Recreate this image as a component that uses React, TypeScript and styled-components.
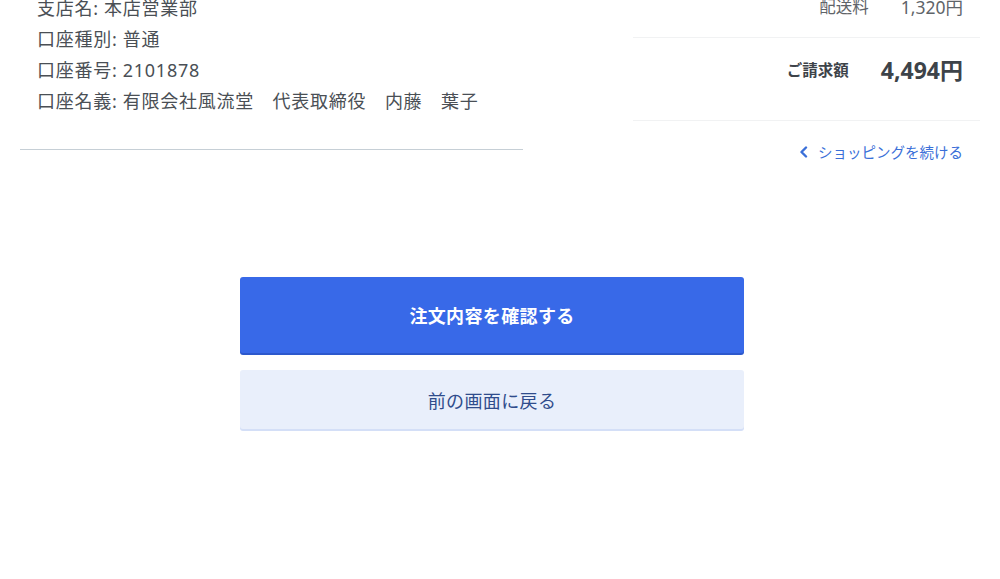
import styled, { createGlobalStyle } from 'styled-components'

const GlobalStyle = createGlobalStyle`
  html, body {
    margin: 0;
    padding: 0;
    background: #ffffff;
    overflow: hidden;
  }
  body {
    font-family: "Noto Sans", "Noto Sans CJK JP", sans-serif;
  }
`

const Page = styled.main`
  width: 1000px;
  height: 579px;
  overflow: hidden;
`

const Top = styled.div`
  display: flex;
  align-items: flex-start;
  padding: 0 20px;
`

const BankInfo = styled.div`
  width: 503px;
  margin-top: -7px;
  padding: 0 0 32px 17px;
  box-sizing: border-box;
  border-bottom: 1px solid #c6cfd6;
`

const InfoLine = styled.p`
  margin: 0;
  font-size: 18px;
  line-height: 31px;
  letter-spacing: 0.04em;
  color: #4a4f55;
  white-space: nowrap;
`

const Summary = styled.div`
  width: 347px;
  margin-left: auto;
`

const SummaryRow = styled.div`
  display: flex;
  justify-content: flex-end;
  align-items: center;
  gap: 32px;
  padding: 0 17px;
  border-bottom: 1px solid #f1f2f3;
`

const ShippingRow = styled(SummaryRow)`
  margin-top: -8px;
  height: 45px;
  align-items: flex-start;
`

const TotalRow = styled(SummaryRow)`
  height: 64px;
  padding-bottom: 18px;
`

const Label = styled.span<{ $bold?: boolean }>`
  font-size: ${(p) => (p.$bold ? '15.5px' : '16.5px')};
  font-weight: ${(p) => (p.$bold ? 700 : 400)};
  line-height: 30px;
  color: ${(p) => (p.$bold ? '#3d4349' : '#5f6469')};
`

const Amount = styled.span<{ $bold?: boolean }>`
  font-size: ${(p) => (p.$bold ? '23px' : '17.5px')};
  font-weight: ${(p) => (p.$bold ? 700 : 400)};
  line-height: 30px;
  color: ${(p) => (p.$bold ? '#3d4349' : '#5f6469')};
`

const BackLink = styled.a`
  display: flex;
  justify-content: flex-end;
  align-items: center;
  gap: 10px;
  margin-top: 21px;
  padding-right: 17px;
  font-size: 14.5px;
  line-height: 20px;
  color: #3a6fd8;
  text-decoration: none;
  cursor: pointer;
`

const Actions = styled.div`
  display: flex;
  flex-direction: column;
  gap: 17px;
  width: 504px;
  margin: 115px 0 0 240px;
`

const Button = styled.button<{ $primary?: boolean }>`
  width: 100%;
  height: ${(p) => (p.$primary ? '76px' : '59px')};
  border: none;
  border-radius: 3px;
  font-family: "Noto Sans", "Noto Sans CJK JP", sans-serif;
  font-size: 18px;
  letter-spacing: 0.02em;
  font-weight: ${(p) => (p.$primary ? 700 : 400)};
  color: ${(p) => (p.$primary ? '#ffffff' : '#2f4c8c')};
  background: ${(p) => (p.$primary ? '#3869e8' : '#e9effb')};
  box-shadow: ${(p) => (p.$primary ? '0 2px 0 #2c58cc' : '0 2px 0 #d4dff7')};
  cursor: pointer;
`

const Chevron = () => (
  <svg width="9" height="12" viewBox="0 0 9 12" fill="none">
    <path d="M7 1.5 L2.5 6 L7 10.5" stroke="#3a6fd8" strokeWidth="2.4" strokeLinecap="round" strokeLinejoin="round" />
  </svg>
)

const App = () => {
  return (
    <Page>
      <GlobalStyle />
      <Top>
        <BankInfo>
          <InfoLine>支店名: 本店営業部</InfoLine>
          <InfoLine>口座種別: 普通</InfoLine>
          <InfoLine>口座番号: 2101878</InfoLine>
          <InfoLine>口座名義: 有限会社風流堂　代表取締役　内藤　葉子</InfoLine>
        </BankInfo>
        <Summary>
          <ShippingRow>
            <Label>配送料</Label>
            <Amount>1,320円</Amount>
          </ShippingRow>
          <TotalRow>
            <Label $bold>ご請求額</Label>
            <Amount $bold>4,494円</Amount>
          </TotalRow>
          <BackLink>
            <Chevron />
            ショッピングを続ける
          </BackLink>
        </Summary>
      </Top>
      <Actions>
        <Button $primary>注文内容を確認する</Button>
        <Button>前の画面に戻る</Button>
      </Actions>
    </Page>
  )
}

export default App
